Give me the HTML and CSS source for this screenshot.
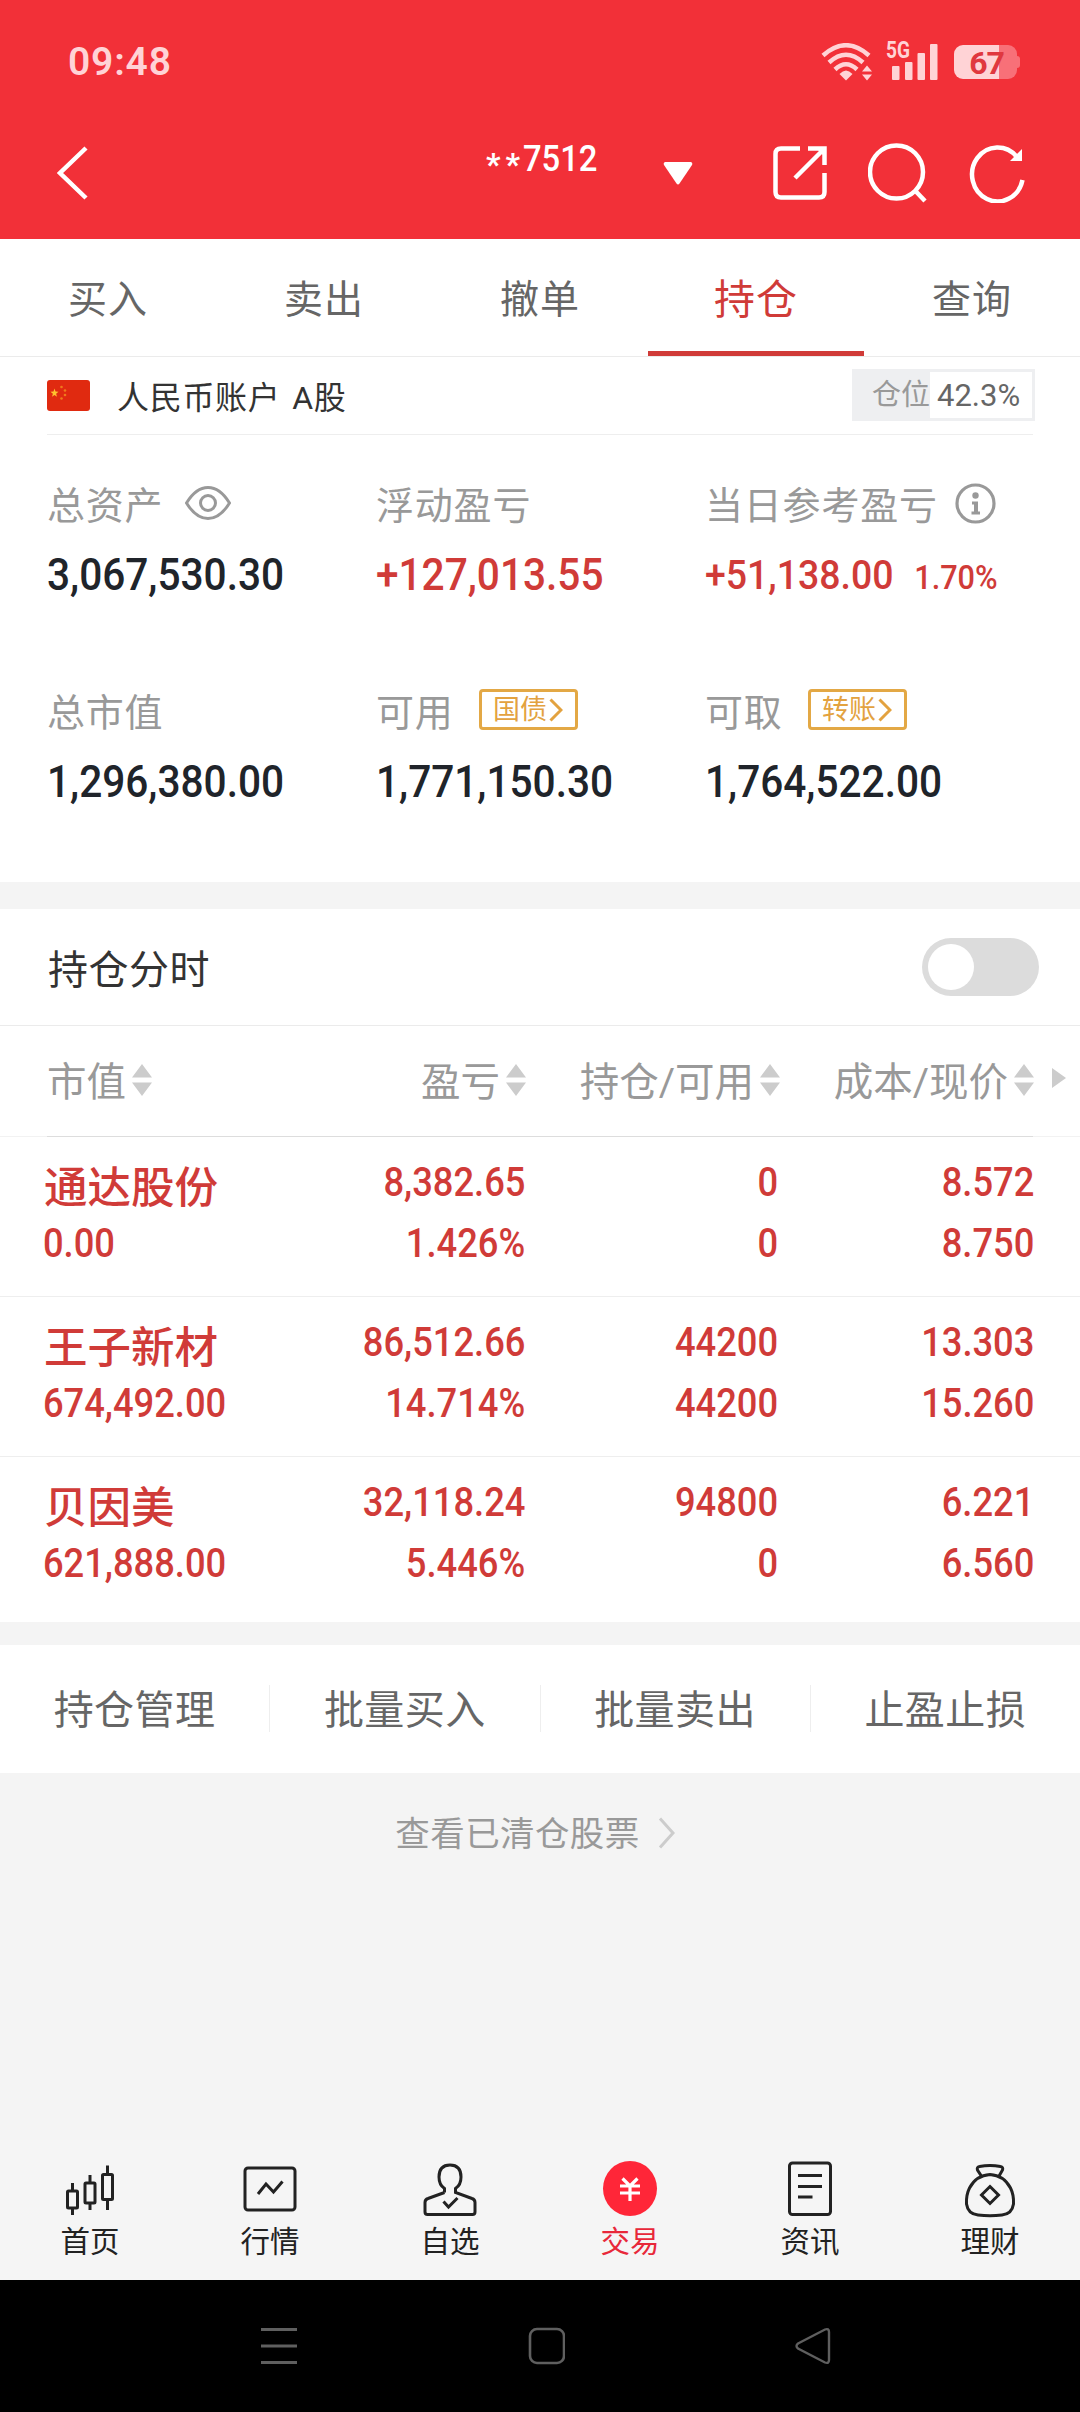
FILE: index.html
```html
<!DOCTYPE html>
<html lang="zh-CN">
<head>
    <meta charset="UTF-8">
    <meta name="viewport" content="width=device-width, initial-scale=1.0">
    <title>持仓</title>
    <link rel="stylesheet" href="styles.css">
</head>
<body>
    <div class="header">
        <div class="status-bar">
            <span class="time">09:48</span>
            <div class="status-icons">
                <svg class="wifi" width="52" height="38" viewBox="0 0 52 38">
                    <g fill="none" stroke="#ffd3d6" stroke-width="4.500">
                        <path d="M2 12.500Q25 -8 48 12.500"/>
                        <path d="M8 19.500Q25 4 42 19.500"/>
                        <path d="M14 26.500Q25 16 36 26.500"/>
                    </g>
                    <path d="M18.500 31Q25 24 31.500 31L25 37.500Z" fill="#ffd3d6"/>
                    <path d="M41 28.500l5-6 5 6zM41 31.500h10l-5 6z" fill="#ffd3d6"/>
                </svg>
                <div class="signal">
                    <span class="network">5G</span>
                    <svg width="46" height="36" viewBox="0 0 46 36" fill="#ffd3d6">
                        <rect x="0" y="22" width="7.500" height="14" rx="1"/>
                        <rect x="13" y="18" width="7.500" height="18" rx="1"/>
                        <rect x="25.500" y="9" width="7.500" height="27" rx="1"/>
                        <rect x="38" y="0" width="7.500" height="36" rx="1"/>
                    </svg>
                </div>
                <div class="battery"><span>67</span></div>
            </div>
        </div>
        <div class="title-bar">
            <svg class="back" width="32" height="54" viewBox="0 0 32 54">
                <path d="M29 2L3 27l26 25" fill="none" stroke="#fff" stroke-width="4.500"/>
            </svg>
            <div class="account"><span class="stars">**</span><span class="account-no">7512</span></div>
            <svg class="dropdown" width="30" height="24" viewBox="0 0 30 24">
                <path d="M2 1h26q2 1 1 3L16.500 22.500q-1.500 2-3 0L1 4Q0 2 2 1z" fill="#fff"/>
            </svg>
            <div class="actions">
                <svg width="54" height="54" viewBox="0 0 54 54" fill="none" stroke="#fff" stroke-width="4.500">
                    <path d="M27 2.500H8Q2.500 2.500 2.500 8v38q0 5.500 5.500 5.500h38q5.500 0 5.500-5.500V27"/>
                    <path d="M35 2.500h16.500V19M51 3L22 32"/>
                    <path d="M43 2h9v9z" fill="#fff" stroke="none"/>
                </svg>
                <svg width="60" height="60" viewBox="0 0 60 60" fill="none" stroke="#fff" stroke-width="4.500">
                    <circle cx="28.500" cy="29" r="26.500"/>
                    <path d="M47 47.500L57 58"/>
                </svg>
                <svg width="56" height="60" viewBox="0 0 56 60" fill="none" stroke="#fff" stroke-width="4.500">
                    <path d="M48 14A25.500 27 0 1 0 53.500 37"/>
                    <path d="M53 6v12H41z" fill="#fff" stroke="none"/>
                </svg>
            </div>
        </div>
    </div>

    <div class="tabs">
        <div class="tab">买入</div>
        <div class="tab">卖出</div>
        <div class="tab">撤单</div>
        <div class="tab active">持仓</div>
        <div class="tab">查询</div>
    </div>

    <div class="account-row">
        <svg class="flag" width="43" height="31" viewBox="0 0 43 31">
            <rect width="43" height="31" rx="3" fill="#e02a10"/>
            <path d="M7.500 8.500l1 3 3 .2-2.400 2 .9 3-2.500-1.800L5 16.700l.9-3-2.400-2 3-.2z" fill="#ffc22e"/>
            <g fill="#ef7a1c">
                <circle cx="14.500" cy="7" r="1.300"/>
                <circle cx="18" cy="10.500" r="1.300"/>
                <circle cx="18" cy="15" r="1.300"/>
                <circle cx="14.500" cy="18.500" r="1.300"/>
            </g>
        </svg>
        <span class="account-name">人民币账户 A股</span>
        <div class="position">
            <span class="position-label">仓位</span>
            <span class="position-value">42.3%</span>
        </div>
    </div>

    <div class="summary">
        <div class="item">
            <div class="label">总资产
                <svg class="eye" width="46" height="34" viewBox="0 0 46 34" fill="none" stroke="#999" stroke-width="3">
                    <path d="M1.500 17Q11 1.500 23 1.500T44.500 17Q35 32.500 23 32.500T1.500 17z"/>
                    <circle cx="23" cy="17" r="7.500"/>
                </svg>
            </div>
            <div class="value">3,067,530.30</div>
        </div>
        <div class="item">
            <div class="label">浮动盈亏</div>
            <div class="value up">+127,013.55</div>
        </div>
        <div class="item">
            <div class="label">当日参考盈亏
                <svg class="info" width="41" height="41" viewBox="0 0 41 41">
                    <circle cx="20.500" cy="20.500" r="18.500" fill="none" stroke="#999" stroke-width="3.200"/>
                    <circle cx="20.500" cy="12.500" r="3.200" fill="#999"/>
                    <path d="M17 18.500h6v10H25v3h-8.500v-3H19v-7h-2z" fill="#999"/>
                </svg>
            </div>
            <div class="value up today">+51,138.00<span class="percent">1.70%</span></div>
        </div>
        <div class="item">
            <div class="label">总市值</div>
            <div class="value">1,296,380.00</div>
        </div>
        <div class="item">
            <div class="label">可用
                <span class="chip">国债<svg width="14" height="24" viewBox="0 0 14 24"><path d="M1.500 1.500L12 12 1.500 22.500" fill="none" stroke="#e3a23f" stroke-width="3"/></svg></span>
            </div>
            <div class="value">1,771,150.30</div>
        </div>
        <div class="item">
            <div class="label">可取
                <span class="chip">转账<svg width="14" height="24" viewBox="0 0 14 24"><path d="M1.500 1.500L12 12 1.500 22.500" fill="none" stroke="#e3a23f" stroke-width="3"/></svg></span>
            </div>
            <div class="value">1,764,522.00</div>
        </div>
    </div>

    <div class="chart-row">
        <span>持仓分时</span>
        <div class="toggle"></div>
    </div>

    <div class="table-head">
        <div class="col first"><span>市值</span><i class="sort"></i></div>
        <div class="col"><span>盈亏</span><i class="sort"></i></div>
        <div class="col"><span>持仓/可用</span><i class="sort"></i></div>
        <div class="col"><span>成本/现价</span><i class="sort"></i></div>
        <i class="more"></i>
    </div>
    <div class="divider"></div>

    <div class="stocks">
        <div class="stock">
            <div class="cell first"><span class="name">通达股份</span><span class="num">0.00</span></div>
            <div class="cell"><span class="num">8,382.65</span><span class="num">1.426%</span></div>
            <div class="cell"><span class="num">0</span><span class="num">0</span></div>
            <div class="cell"><span class="num">8.572</span><span class="num">8.750</span></div>
        </div>
        <div class="stock">
            <div class="cell first"><span class="name">王子新材</span><span class="num">674,492.00</span></div>
            <div class="cell"><span class="num">86,512.66</span><span class="num">14.714%</span></div>
            <div class="cell"><span class="num">44200</span><span class="num">44200</span></div>
            <div class="cell"><span class="num">13.303</span><span class="num">15.260</span></div>
        </div>
        <div class="stock">
            <div class="cell first"><span class="name">贝因美</span><span class="num">621,888.00</span></div>
            <div class="cell"><span class="num">32,118.24</span><span class="num">5.446%</span></div>
            <div class="cell"><span class="num">94800</span><span class="num">0</span></div>
            <div class="cell"><span class="num">6.221</span><span class="num">6.560</span></div>
        </div>
    </div>

    <div class="batch">
        <div class="batch-btn">持仓管理</div>
        <div class="batch-btn">批量买入</div>
        <div class="batch-btn">批量卖出</div>
        <div class="batch-btn">止盈止损</div>
    </div>

    <div class="cleared">
        查看已清仓股票
        <svg width="17" height="32" viewBox="0 0 17 32"><path d="M2 1.500L15 16 2 30.500" fill="none" stroke="#ccc" stroke-width="3"/></svg>
    </div>

    <div class="bottom-nav">
        <div class="nav-item">
            <svg width="60" height="60" viewBox="0 0 60 60" fill="none" stroke="#222" stroke-width="3">
                <path d="M12.500 23v8M12.500 48v7M30 15v8M30 43v7M47.500 5.500v9M47.500 40v10"/>
                <rect x="7.500" y="31" width="10" height="17" rx="1"/>
                <rect x="25" y="23" width="10" height="20" rx="1"/>
                <rect x="42.500" y="14.500" width="10" height="25" rx="1"/>
            </svg>
            <span>首页</span>
        </div>
        <div class="nav-item">
            <svg width="60" height="60" viewBox="0 0 60 60" fill="none" stroke="#222" stroke-width="3">
                <rect x="5" y="8" width="50" height="42" rx="3"/>
                <path d="M18 34l8-10 7.500 8L42.500 21.500"/>
            </svg>
            <span>行情</span>
        </div>
        <div class="nav-item">
            <svg width="60" height="60" viewBox="0 0 60 60" fill="none" stroke="#222" stroke-width="3">
                <path d="M24.500 32.500v-4Q19 25 19 17 19 5 30 5t11 12q0 8-5.500 11.500v4L52 38.500q3 1 3 4V52q0 2.500-2.500 2.500h-45Q5 54.500 5 52v-9.500q0-3 3-4l16.500-6"/>
                <path d="M23.500 41.500l5 5.500 9-9"/>
            </svg>
            <span>自选</span>
        </div>
        <div class="nav-item current">
            <svg width="60" height="60" viewBox="0 0 60 60">
                <ellipse cx="30" cy="28.500" rx="27" ry="27.500" fill="#ff2638"/>
                <path d="M22.500 18.500l7.500 7.500 7.500-7.500M20 26h20M20 33h20M30 26v15" fill="none" stroke="#fff" stroke-width="3.200"/>
            </svg>
            <span>交易</span>
        </div>
        <div class="nav-item">
            <svg width="60" height="60" viewBox="0 0 60 60" fill="none" stroke="#222" stroke-width="3">
                <rect x="9.500" y="3" width="41" height="51.500" rx="3"/>
                <path d="M18 15.500h24M18 26.500h24M18 37h14.500"/>
            </svg>
            <span>资讯</span>
        </div>
        <div class="nav-item">
            <svg width="60" height="60" viewBox="0 0 60 60" fill="none" stroke="#222" stroke-width="3">
                <path d="M22 17L17.500 10q-1-3 2-3.500 10.500-2 21 0 3 .5 2 3.500L38.500 17"/>
                <path d="M30 14.500Q16 15.500 9.500 28 6 35 6.500 44 8 54 18 55q12 1.500 24 0 10-1 11.500-11Q54 35 50.500 28 44 15.500 30 14.500z"/>
                <path d="M30 26.500l8.500 8.500-8.500 8.500-8.500-8.500z"/>
            </svg>
            <span>理财</span>
        </div>
    </div>

    <div class="system-nav">
        <svg width="36" height="38" viewBox="0 0 36 38"><path d="M0 2.500h36M0 19h36M0 35.500h36" stroke="#5f5f5f" stroke-width="3"/></svg>
        <svg width="38" height="38" viewBox="0 0 38 38"><rect x="3" y="2" width="34" height="34" rx="7" fill="none" stroke="#5f5f5f" stroke-width="2.600"/></svg>
        <svg width="36" height="38" viewBox="0 0 36 38"><path d="M3 16.500L30 2.500q4-1.500 4 2.500v28q0 4-4 2.500L3 21.500q-3-2.500 0-5z" fill="none" stroke="#5f5f5f" stroke-width="2.400"/></svg>
    </div>
</body>
</html>
```
FILE: styles.css
```css
* {
    box-sizing: border-box;
}

body {
    margin: 0;
    width: 1080px;
    height: 2412px;
    display: flex;
    flex-direction: column;
    background: #f4f4f4;
    color: #333;
    font-family: Roboto, 'Noto Sans CJK SC', sans-serif;
    overflow: hidden;
}

svg {
    display: block;
    flex-shrink: 0;
}

.header {
    height: 239px;
    background: #f23038;
    color: #fff;
}

.status-bar {
    height: 124px;
    padding: 0 60px 0 68px;
    display: flex;
    justify-content: space-between;
    align-items: center;
    color: #ffd3d6;
}

.time {
    font-size: 39px;
    font-weight: 600;
    letter-spacing: 0.800px;
}

.status-icons {
    display: flex;
    align-items: center;
}

.signal {
    position: relative;
    margin: 0 16px 0 19px;
}

.network {
    position: absolute;
    left: -6px;
    top: -5px;
    font-size: 23px;
    font-weight: 700;
    line-height: 24px;
    transform: scaleX(0.830);
    transform-origin: left;
}

.battery {
    width: 63px;
    height: 34px;
    margin-right: 3px;
    border-radius: 9px;
    background: linear-gradient(to right, #ffd3d6 45px, #f87078 45px);
    display: flex;
    align-items: center;
    justify-content: center;
    padding: 2px 0 0 2px;
    color: #e0383f;
    font-size: 32px;
    font-weight: 700;
    letter-spacing: -1px;
    position: relative;
}

.battery::after {
    content: "";
    position: absolute;
    right: -3px;
    top: 11px;
    width: 3px;
    height: 12px;
    border-radius: 0 3px 3px 0;
    background: #f87078;
}

.title-bar {
    height: 98px;
    padding: 0 55px 0 57px;
    display: flex;
    align-items: center;
}

.account {
    width: 112px;
    height: 64px;
    margin-left: 397px;
    display: flex;
    font-weight: 500;
    line-height: 36px;
    font-size: 36px;
}

.stars {
    width: 37px;
    padding-top: 5px;
    font-size: 32px;
    font-weight: 700;
    letter-spacing: 5px;
}

.account-no {
    transform: scaleX(0.910);
    transform-origin: left;
}

.dropdown {
    margin-left: 65px;
}

.actions {
    flex: 1;
    margin-left: 80px;
    display: flex;
    align-items: center;
    justify-content: space-between;
}

.tabs {
    height: 118px;
    background: #fff;
    border-bottom: 1px solid #ebebeb;
    display: flex;
}

.tab {
    flex: 1;
    display: flex;
    align-items: center;
    justify-content: center;
    padding-top: 1px;
    border-bottom: 5px solid transparent;
    color: #666;
    font-size: 39px;
    letter-spacing: 1px;
}

.tab.active {
    color: #d03b38;
    border-color: #d03b38;
    font-size: 41px;
}

.account-row {
    height: 78px;
    padding: 0 45px 2px 47px;
    background: linear-gradient(#eee, #eee) 47px 77px / 986px 1px no-repeat #fff;
    display: flex;
    align-items: center;
}

.account-name {
    margin-left: 27px;
    font-size: 32px;
    letter-spacing: 0.700px;
    word-spacing: 3px;
}

.position {
    margin-left: auto;
    width: 183px;
    height: 52px;
    border: 3px solid #eeeff1;
    display: flex;
    align-items: center;
    font-size: 31px;
}

.position-label {
    width: 75px;
    height: 46px;
    padding-left: 17px;
    background: #eeeff1;
    color: #999;
    font-size: 29px;
    line-height: 46px;
    white-space: nowrap;
    overflow: hidden;
}

.position-value {
    margin-left: 7px;
    color: #666;
}

.summary {
    height: 447px;
    padding: 37px 0 0 47px;
    background: #fff;
    display: grid;
    grid-template-columns: 329px 329px 1fr;
    grid-template-rows: 207px 207px;
}

.label {
    height: 64px;
    padding-bottom: 4px;
    display: flex;
    align-items: center;
    color: #999;
    font-size: 38px;
    letter-spacing: 0.800px;
    white-space: nowrap;
}

.eye {
    margin: 2px 0 0 22px;
}

.info {
    margin: 2px 0 0 17px;
}

.value {
    height: 78px;
    line-height: 78px;
    color: #20242a;
    font-size: 45px;
    font-weight: 500;
    white-space: nowrap;
    transform: scaleX(0.902);
    transform-origin: left;
}

.up {
    color: #d03b38;
}

.today {
    font-size: 41.500px;
}

.percent {
    margin-left: 23px;
    font-size: 34px;
}

.chip {
    width: 99px;
    height: 41px;
    margin: 1px 0 0 25px;
    border: 3px solid #e3a845;
    border-radius: 4px;
    display: flex;
    align-items: center;
    justify-content: center;
    gap: 2px;
    color: #e3a23f;
    font-size: 27px;
    line-height: 34px;
    letter-spacing: 0;
}

.chart-row {
    height: 117px;
    margin-top: 27px;
    padding: 0 41px 0 48px;
    background: #fff;
    border-bottom: 1px solid #ebebeb;
    display: flex;
    align-items: center;
    justify-content: space-between;
    font-size: 40px;
    letter-spacing: 0.500px;
}

.toggle {
    width: 117px;
    height: 58px;
    padding: 6px;
    border-radius: 29px;
    background: #dcdcdc;
}

.toggle::before {
    content: "";
    display: block;
    width: 46px;
    height: 46px;
    border-radius: 50%;
    background: #fff;
}

.table-head,
.stock {
    display: grid;
    grid-template-columns: 200px 280px 254px 254px;
    padding-left: 46px;
    background: #fff;
}

.table-head {
    height: 110px;
    align-items: center;
    color: #999;
    font-size: 39.500px;
    position: relative;
}

.col {
    display: flex;
    align-items: center;
    justify-content: flex-end;
    white-space: nowrap;
}

.col span {
    padding-bottom: 5px;
}

.col.first {
    justify-content: flex-start;
    padding-left: 1px;
}

.sort {
    width: 20px;
    height: 32px;
    margin: -2px 0 0 6px;
    background: #ccc;
    clip-path: polygon(50% 0, 100% 42%, 0 42%, 0 58%, 100% 58%, 50% 100%, 0 58%, 0 42%);
}

.more {
    position: absolute;
    right: 14px;
    top: 42px;
    border-left: 14px solid #ccc;
    border-top: 10px solid transparent;
    border-bottom: 10px solid transparent;
}

.divider {
    height: 1px;
    background: linear-gradient(#ddd, #ddd) 47px 0 / 986px 1px no-repeat #f2f2f2;
}

.stocks {
    height: 485px;
    background: #fff;
}

.stock {
    height: 160px;
    grid-template-columns: 201px 280px 253px 256px;
    padding-left: 44px;
    padding-top: 15px;
    border-bottom: 1px solid #eee;
    color: #d03b38;
}

.stock:last-child {
    border-bottom: none;
}

.cell {
    display: flex;
    flex-direction: column;
    align-items: flex-end;
}

.cell.first {
    align-items: flex-start;
}

.num {
    height: 61px;
    line-height: 61px;
    font-size: 40.500px;
    font-weight: 500;
    transform: scaleX(0.896);
    transform-origin: right;
}

.first .num {
    margin-left: -1px;
    transform-origin: left;
}

.name {
    height: 61px;
    line-height: 73px;
    font-size: 43.500px;
    font-weight: 500;
    white-space: nowrap;
}

.batch {
    height: 128px;
    margin-top: 23px;
    padding: 40px 0 41px;
    background: #fff;
    display: flex;
}

.batch-btn {
    flex: 1;
    padding-bottom: 3px;
    border-right: 1px solid #eee;
    display: flex;
    align-items: center;
    justify-content: center;
    color: #666;
    font-size: 40px;
    letter-spacing: 0.500px;
}

.batch-btn:last-child {
    border-right: none;
}

.cleared {
    height: 367px;
    padding-top: 39px;
    padding-right: 10px;
    display: flex;
    align-items: flex-start;
    justify-content: center;
    gap: 18px;
    color: #999;
    font-size: 34.500px;
    letter-spacing: 0.400px;
    line-height: 44px;
}

.cleared svg {
    margin-top: 5px;
}

.bottom-nav {
    height: 140px;
    padding-top: 20px;
    background: #f5f5f5;
    display: flex;
}

.nav-item {
    flex: 1;
    display: flex;
    flex-direction: column;
    align-items: center;
    color: #222;
    font-size: 29.500px;
    line-height: 45px;
}

.current {
    color: #e8283a;
}

.system-nav {
    height: 132px;
    padding: 0 249px 0 261px;
    background: #000;
    display: flex;
    align-items: center;
    justify-content: space-between;
}
```
